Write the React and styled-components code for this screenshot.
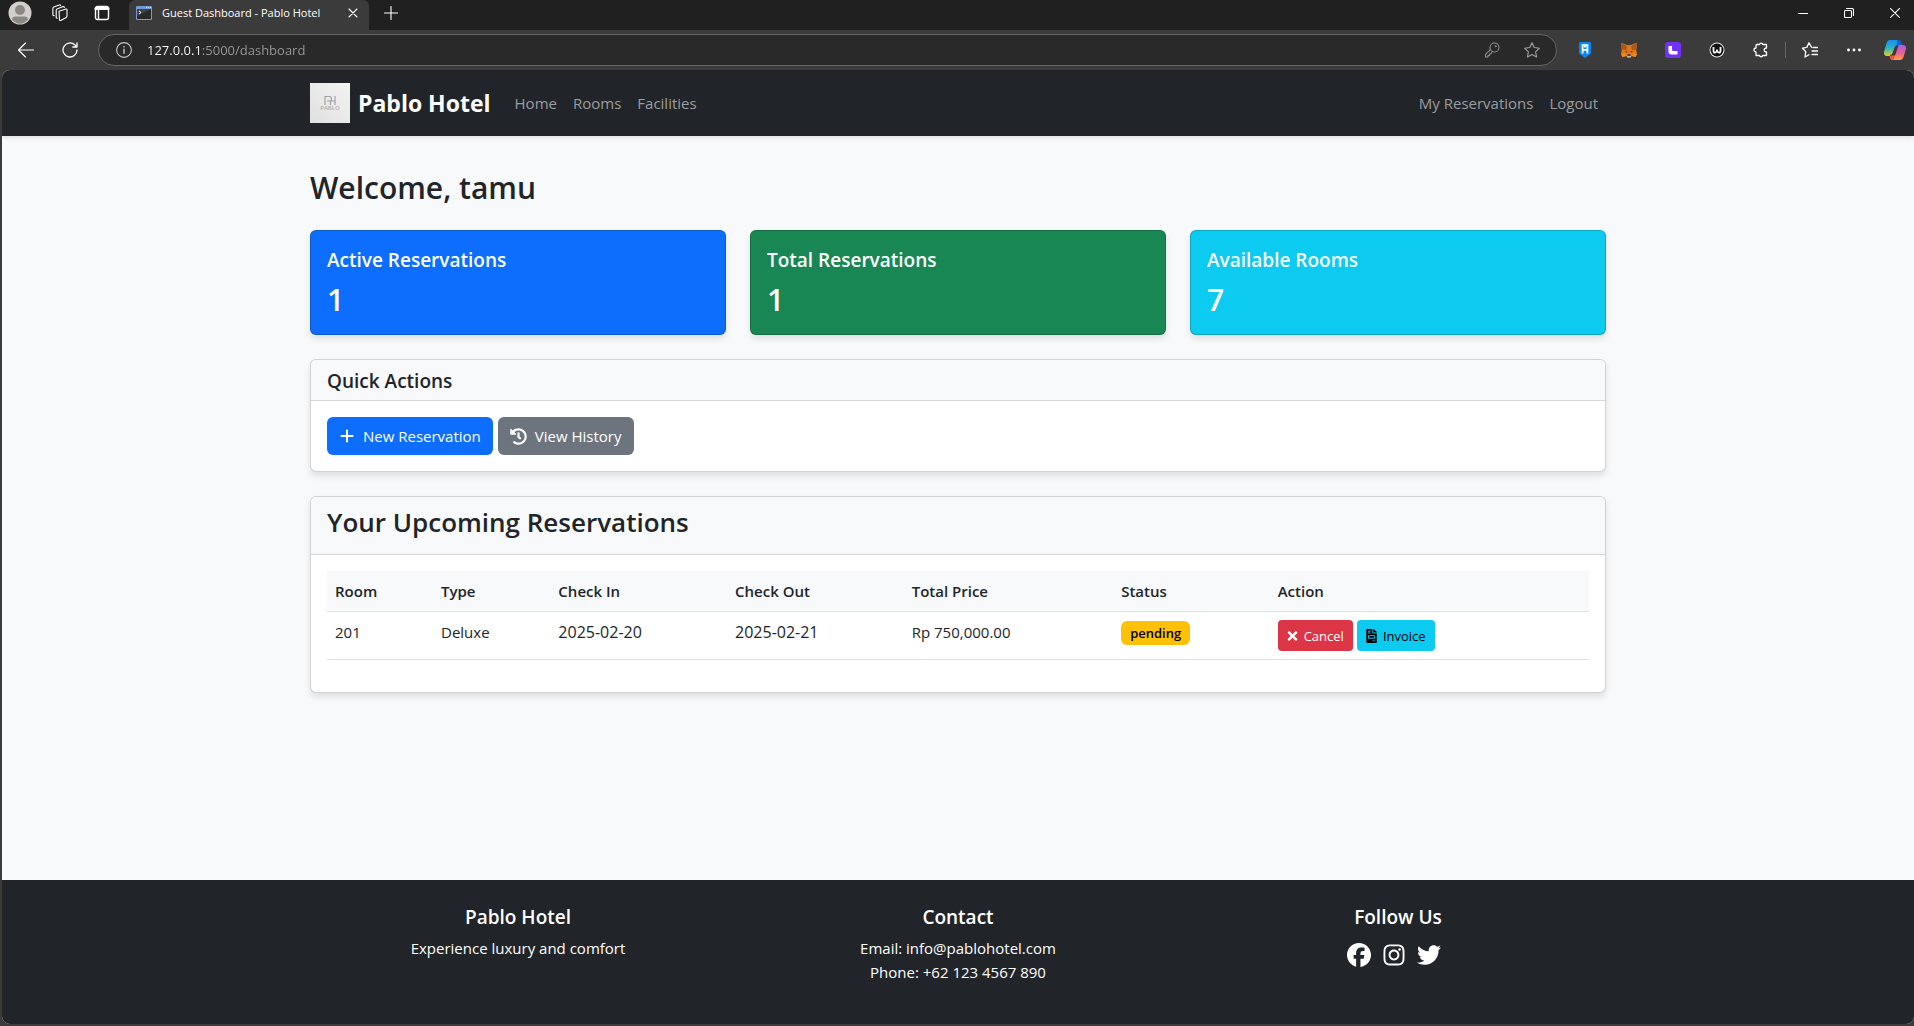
import React from 'react';
import styled, { createGlobalStyle, css } from 'styled-components';
import { FaFacebook, FaInstagram, FaTwitter, FaPlus } from 'react-icons/fa6';
import { FaHistory, FaFileInvoice, FaTimes } from 'react-icons/fa';

const GlobalStyle = createGlobalStyle`
  *, *::before, *::after { box-sizing: border-box; }
  body {
    margin: 0;
    background: #3b3b3b;
    color: #212529;
    font-family: 'Open Sans', 'Noto Sans', sans-serif;
    font-size: 15px;
    line-height: 24px;
  }
  h1, h2, h3, p { margin: 0; }
  a { text-decoration: none; }
  button { font: inherit; cursor: pointer; }
  svg { display: block; flex: none; }
`;

const Window = styled.div`
  display: flex;
  flex-direction: column;
  min-height: 100vh;
  padding-bottom: 2px;
`;

/* ---------- browser frame ---------- */

const TabStrip = styled.div`
  display: flex;
  align-items: stretch;
  height: 30px;
  background: #202020;
  color: #fff;
`;

const ChromeButton = styled.button`
  display: flex;
  align-items: center;
  justify-content: center;
  width: ${(p) => p.$width || 40}px;
  height: ${(p) => p.$height || 30}px;
  padding: 0;
  border: 0;
  background: transparent;
  color: ${(p) => p.$color || '#fff'};
`;

const LeadingTools = styled.div`
  display: flex;
  height: 26px;
  padding-right: 5px;
`;

const Tab = styled.div`
  display: flex;
  align-items: center;
  width: 240px;
  padding: 0 6px 4px 7px;
  border-radius: 6px 6px 0 0;
  background: #3b3b3b;
`;

const TabTitle = styled.span`
  flex: 1;
  padding-left: 10px;
  font-size: 11px;
  line-height: 16px;
  white-space: nowrap;
`;

const WindowControls = styled.div`
  display: flex;
  gap: 8px;
  height: 26px;
  margin-left: auto;
`;

const Toolbar = styled.div`
  display: flex;
  align-items: center;
  height: 40px;
  padding-left: 4px;
  background: #3b3b3b;
`;

const AddressBar = styled.label`
  display: flex;
  flex: 1;
  align-items: center;
  height: 32px;
  margin: 0 6px;
  padding: 0 4px 0 17px;
  border: 1px solid #666;
  border-radius: 16px;
  background: #292929;
`;

const AddressInput = styled.input`
  flex: 1;
  min-width: 0;
  margin-left: 15px;
  padding: 0;
  border: 0;
  outline: 0;
  background: linear-gradient(to right, #fff 55px, #9a9a9a 55px);
  background-clip: text;
  -webkit-text-fill-color: transparent;
  color: #9a9a9a;
  font: 13px/20px 'Open Sans', 'Noto Sans', sans-serif;
`;

const ToolbarDivider = styled.span`
  width: 1px;
  height: 16px;
  margin: 0 2px;
  background: #666;
`;

/* ---------- site ---------- */

const Site = styled.div`
  display: flex;
  flex: 1;
  flex-direction: column;
  margin-left: 2px;
  border-radius: 8px;
  overflow: hidden;
  background: #f8f9fa;
`;

const Container = styled.div`
  width: 100%;
  max-width: 1320px;
  margin: 0 auto;
  padding: 0 12px;
`;

const Navbar = styled.nav`
  padding: 13px 0;
  background: #212529;
  box-shadow: 0 2px 4px rgba(0, 0, 0, 0.1);
`;

const NavInner = styled(Container)`
  display: flex;
  align-items: center;
`;

const Brand = styled.a`
  display: flex;
  align-items: center;
  gap: 8px;
  margin-right: 24px;
  color: #fff;
  font-size: 23px;
  font-weight: 700;
  line-height: 40px;
`;

const NavLinks = styled.div`
  display: flex;
  gap: 16px;
  padding-right: 8px;
  & + & { margin-left: auto; }
`;

const NavLink = styled.a`
  color: #9b9d9e;
`;

const Main = styled.main`
  flex: 1;
  padding: 32px 0 24px;
`;

const Welcome = styled.h1`
  margin-bottom: 22px;
  font-size: 30px;
  font-weight: 600;
  line-height: 40px;
`;

const StatGrid = styled.div`
  display: grid;
  grid-template-columns: repeat(3, 1fr);
  gap: 24px;
  margin-bottom: 24px;
`;

const cardBox = css`
  border: 1px solid rgba(0, 0, 0, 0.176);
  border-radius: 6px;
  box-shadow: 0 4px 6px rgba(0, 0, 0, 0.1);
`;

const StatCard = styled.section`
  ${cardBox}
  padding: 16px 16px 14px;
  background: ${(p) => p.$color};
  color: #fff;
`;

const StatTitle = styled.h2`
  margin-bottom: 6px;
  font-size: 19px;
  font-weight: 600;
  line-height: 26px;
`;

const StatValue = styled.p`
  font-size: 30px;
  font-weight: 600;
  line-height: 41px;
`;

const Card = styled.section`
  ${cardBox}
  margin-bottom: 24px;
  background: #fff;
`;

const CardHeader = styled.header`
  padding: 8px 16px ${(p) => (p.$large ? 14 : 6)}px;
  border-bottom: 1px solid #d5d6d7;
  border-radius: 5px 5px 0 0;
  background: #f8f9fa;
`;

const CardTitle = styled.h2`
  font-size: ${(p) => (p.$large ? 26 : 19)}px;
  font-weight: 600;
  line-height: ${(p) => (p.$large ? 35 : 26)}px;
`;

const CardBody = styled.div`
  padding: 16px;
`;

const ActionBar = styled.div`
  display: flex;
  gap: ${(p) => (p.$small ? 4 : 5)}px;
`;

const tones = {
  primary: ['#0d6efd', '#fff'],
  secondary: ['#6c757d', '#fff'],
  danger: ['#dc3545', '#fff'],
  info: ['#0dcaf0', '#000'],
};

const smallButton = css`
  gap: 6px;
  height: 31px;
  padding: 0 9px;
  border-radius: 4px;
  font-size: 13px;
  svg { width: 11px; height: 14px; }
`;

const Button = styled.button`
  display: inline-flex;
  align-items: center;
  gap: 8px;
  height: 38px;
  padding: 0 12px;
  border: 0;
  border-radius: 6px;
  background: ${(p) => tones[p.$tone][0]};
  color: ${(p) => tones[p.$tone][1]};
  font-size: 15px;
  white-space: nowrap;
  ${(p) => p.$small && smallButton}
`;

const Table = styled.table`
  width: 100%;
  margin-bottom: 16px;
  border-collapse: separate;
  border-spacing: 0;
  table-layout: fixed;
`;

const HeadCell = styled.th`
  width: ${(p) => p.$width};
  padding: 8px;
  border-bottom: 1px solid #dee2e6;
  background: #f8f9fa;
  font-weight: 600;
  text-align: left;
`;

const Cell = styled.td`
  padding: 8px;
  border-bottom: 1px solid #dee2e6;
  vertical-align: top;
  font-size: ${(p) => (p.$numeric ? 16 : 15)}px;
`;

const Badge = styled.span`
  display: inline-block;
  margin-top: 1px;
  padding: 0 9px;
  border-radius: 6px;
  background: #ffc107;
  color: #000;
  font-size: 13px;
  font-weight: 600;
  vertical-align: top;
`;

const Footer = styled.footer`
  padding: 24px 0;
  background: #212529;
  color: #fff;
  text-align: center;
`;

const FooterGrid = styled(Container)`
  display: grid;
  grid-template-columns: repeat(3, 1fr);
  gap: 24px;
`;

const FooterTitle = styled.h2`
  margin-bottom: 6px;
  font-size: 19px;
  font-weight: 600;
  line-height: 26px;
`;

const FooterText = styled.p`
  padding-bottom: 16px;
`;

const Socials = styled.div`
  display: flex;
  justify-content: center;
  gap: 11px;
  padding: 7px 8px 0 0;
`;

const SocialLink = styled.a`
  color: #fff;
`;

/* ---------- drawings ---------- */

const Line = ({ size = 16, children, ...rest }) => (
  <svg width={size} height={size} viewBox={`0 0 ${size} ${size}`} fill="none" stroke="currentColor" strokeWidth="1.1" strokeLinecap="round" strokeLinejoin="round" aria-hidden="true" {...rest}>
    {children}
  </svg>
);

const Avatar = () => (
  <svg width="24" height="24" viewBox="0 0 24 24" aria-hidden="true">
    <circle cx="12" cy="12" r="11.5" fill="#d3d0cc" />
    <circle cx="12" cy="9" r="5" fill="#8b8783" />
    <path d="M4 18.5c0-2 1.600-2.900 3.500-2.900h9c1.900 0 3.500.900 3.500 2.900-2 2.600-4.700 4.200-8 4.200s-6-1.600-8-4.200z" fill="#8b8783" />
  </svg>
);

const Workspaces = () => (
  <Line size={18}>
    <path d="M8 7.200l7-2.200q1-.2 1 .8v6.400q0 .9-.8 1.200l-5.500 3q-1 .5-1.200-.6z" />
    <path d="M6.200 14.200l-1-.4V6.200q0-1 .8-1.300l6.200-2.300q1-.3 1.100.9" />
    <path d="M3.200 11.800l-1.300-.6V4.400q0-1 .8-1.300L8.400 1q1-.3 1.200.5" />
  </Line>
);

const VerticalTabs = () => (
  <Line strokeWidth="1.400">
    <rect x="1.500" y="1.500" width="13" height="13" rx="2" />
    <path d="M2 3.500h12" strokeWidth="3" />
    <path d="M4.500 4v10" />
  </Line>
);

const TerminalIcon = () => (
  <svg width="16" height="14" viewBox="0 0 16 14" aria-hidden="true">
    <rect width="16" height="14" rx="1" fill="#6f9ad6" />
    <rect x="1" y="3" width="14" height="10" fill="#2a2a2a" />
    <path d="M1 3h14L1 10z" fill="#444" />
    <path d="M3 5l2 1.500L3 8" stroke="#fff" fill="none" />
    <path d="M10 1.500h1M12 1.500h1M14 1.500h1" stroke="#d9e8ff" />
  </svg>
);

const Shield = () => (
  <svg width="14" height="16" viewBox="0 0 14 16" aria-hidden="true">
    <path d="M2 0h10l1 1v10.500L7 16l-6-4.500V1z" fill="#0b87f0" />
    <path d="M4.600 11.500V3.200h4.800v8.300M4.600 7.800h4.800M7 3v2.500" stroke="#fff" strokeWidth="1.800" fill="none" />
  </svg>
);

const Fox = () => (
  <svg width="16" height="16" viewBox="0 0 16 16" aria-hidden="true">
    <path d="M.5.800L6 3h4L15.500.800 16 5l-.8 3 .8 4-1.500 3-3.700-1-1.300 1.500h-3L5.200 14l-3.700 1L0 12l.8-4L0 5z" fill="#e2761b" />
    <path d="M.5.800L6 4.500 5 8 .8 7.500 0 5zM15.500.800L10 4.500l1 3.500 4.200-.5L16 5z" fill="#a8571f" />
    <path d="M4 9l2.500.3-.8 1.300zM12 9l-2.500.3.800 1.300z" fill="#3a2f2a" />
    <path d="M0 12l4-.5 1.200 2.500-3.700 1zM16 12l-4-.5-1.200 2.500 3.700 1z" fill="#f6851b" />
    <path d="M5.500 13.200L6.500 12h3l1 1.200-1 2.300h-3z" fill="#c9b7a8" />
    <path d="M6.500 12.300h3l.3 1.500H6.200z" fill="#1d2027" />
  </svg>
);

const PurpleL = () => (
  <svg width="16" height="16" viewBox="0 0 16 16" aria-hidden="true">
    <rect width="16" height="16" rx="3" fill="#7132f5" />
    <path d="M3.500 4h3.500v3.500Q7 9 8.500 9H12.500v3.500H6.500Q3.500 12.500 3.500 9.500z" fill="#fff" />
  </svg>
);

const RoundW = () => (
  <svg width="16" height="16" viewBox="0 0 16 16" aria-hidden="true">
    <circle cx="8" cy="8" r="7.500" fill="#e6e6e6" />
    <circle cx="8" cy="8" r="6.500" fill="#111" />
    <path d="M4.500 5v3.500Q4.500 11 6.500 10.500 8 10 8 7.500 8 10 9.500 10.500q2 .5 2-2V5" stroke="#fff" strokeWidth="1.800" fill="none" />
  </svg>
);

const Copilot = () => (
  <svg width="24" height="22" viewBox="0 0 24 22" aria-hidden="true">
    <defs>
      <linearGradient id="coolRibbon" x1="0" y1="0" x2="0" y2="1">
        <stop offset="0" stopColor="#1b8ef2" />
        <stop offset="0.500" stopColor="#24b5c4" />
        <stop offset="1" stopColor="#e8d21c" />
      </linearGradient>
      <linearGradient id="warmRibbon" x1="0" y1="0" x2="0" y2="1">
        <stop offset="0" stopColor="#a55bf0" />
        <stop offset="0.550" stopColor="#f0608c" />
        <stop offset="1" stopColor="#ffa04a" />
      </linearGradient>
    </defs>
    <path d="M7 1h8q2 0 2.600 2l.9 3H14q-1.600 0-2.200 2l-2 6.500Q9 17 6.500 17H4Q.5 17 1 13l2.600-9Q4.500 1 7 1z" fill="url(#coolRibbon)" />
    <path d="M14 1h1.500q2 0 2.500 2l1 3.500h-3.500q-1.500 0-1.700-2z" fill="#1a5fd0" />
    <path d="M17 21H9.500Q7.700 21 7 18.500L6.500 16q2.500 0 3.300-2.500l2-6Q12.500 6 14 6h6.500q3 .5 2.500 4l-2.500 8Q19.500 21 17 21z" fill="url(#warmRibbon)" />
    <path d="M12 7.500l2-1.500h1.500l-3 9.500q-.6 1.500-2.500 1.500H7.500l-.7-1q2.300 0 3-2.500z" fill="#3a3a3a" />
    <path d="M7 16.500h4.500L10.500 21Q7.800 21 7 18z" fill="#f0512f" />
  </svg>
);

const HotelLogo = () => (
  <svg width="40" height="40" viewBox="0 0 40 40" role="img" aria-label="Pablo Hotel logo">
    <defs>
      <linearGradient id="logoPaper" x1="0" y1="1" x2="1" y2="0">
        <stop offset="0" stopColor="#e0e0e0" />
        <stop offset="1" stopColor="#f3f3f3" />
      </linearGradient>
    </defs>
    <rect width="40" height="40" fill="url(#logoPaper)" />
    <path d="M15 22v-8.500h4.500q2 0 2 2.300t-2 2.200H17M20.500 18v4M20.500 18h4.500M25 13v9" stroke="#a3a3a3" strokeWidth="1.200" fill="none" />
    <text x="20" y="27" textAnchor="middle" fontFamily="Open Sans, sans-serif" fontSize="6" fontWeight="600" fill="#b0b0b0">PABLO</text>
  </svg>
);

/* ---------- data ---------- */

const stats = [
  { title: 'Active Reservations', value: 1, color: '#0d6efd' },
  { title: 'Total Reservations', value: 1, color: '#198754' },
  { title: 'Available Rooms', value: 7, color: '#0dcaf0' },
];

const columns = [
  ['Room', '8.4%'],
  ['Type', '9.3%'],
  ['Check In', '14%'],
  ['Check Out', '14%'],
  ['Total Price', '16.6%'],
  ['Status', '12.4%'],
  ['Action', '25.3%'],
];

const reservations = [
  { room: '201', type: 'Deluxe', checkIn: '2025-02-20', checkOut: '2025-02-21', price: 'Rp 750,000.00', status: 'pending' },
];

function BrowserFrame() {
  return (
    <header>
      <TabStrip>
        <LeadingTools>
          <ChromeButton $height={26} aria-label="Profile"><Avatar /></ChromeButton>
          <ChromeButton $height={26} aria-label="Workspaces"><Workspaces /></ChromeButton>
          <ChromeButton $height={26} $width={44} aria-label="Tab actions"><VerticalTabs /></ChromeButton>
        </LeadingTools>
        <Tab>
          <TerminalIcon />
          <TabTitle>Guest Dashboard - Pablo Hotel</TabTitle>
          <ChromeButton $width={20} $height={20} aria-label="Close tab">
            <Line size={10}><path d="M1 1l8 8M9 1L1 9" /></Line>
          </ChromeButton>
        </Tab>
        <ChromeButton $width={44} $height={26} aria-label="New tab">
          <Line size={14}><path d="M7 .5v13M.5 7h13" /></Line>
        </ChromeButton>
        <WindowControls>
          <ChromeButton $width={38} $height={26} aria-label="Minimize">
            <Line size={10}><path d="M0 5.500h10" /></Line>
          </ChromeButton>
          <ChromeButton $width={38} $height={26} aria-label="Restore">
            <Line size={10}><rect x=".5" y="2.500" width="7" height="7" rx="1" /><path d="M2.500.5H8q1.500 0 1.500 1.500v5.500" /></Line>
          </ChromeButton>
          <ChromeButton $width={38} $height={26} aria-label="Close window">
            <Line size={10}><path d="M0 0l10 10M10 0L0 10" /></Line>
          </ChromeButton>
        </WindowControls>
      </TabStrip>
      <Toolbar>
        <ChromeButton $width={44} aria-label="Back">
          <Line><path d="M15.500 8H.5M7.500 1L.5 8l7 7" /></Line>
        </ChromeButton>
        <ChromeButton $width={44} aria-label="Refresh">
          <Line strokeWidth="1.300"><path d="M15 8a7 7 0 1 1-2.300-5.200L15 5M15 .8V5h-4.200" /></Line>
        </ChromeButton>
        <AddressBar>
          <Line color="#c8c8c8"><circle cx="8" cy="8" r="7.400" /><path d="M8 7.300v4M8 4.500v.4" strokeWidth="1.400" /></Line>
          <AddressInput aria-label="Address" defaultValue="127.0.0.1:5000/dashboard" spellCheck={false} />
          <ChromeButton $color="#8f8f8f" aria-label="Saved passwords">
            <Line><circle cx="10.500" cy="5.500" r="4.500" /><path d="M6.300 7.600L1.500 12.400V15H4v-1.500h1.500V12H7l1.300-2.500" /><circle cx="11.800" cy="4.200" r=".5" /></Line>
          </ChromeButton>
          <ChromeButton $color="#a0a0a0" aria-label="Add to favorites">
            <Line><path d="M8 .8l2.200 4.700 5.200.7-3.800 3.600 1 5.200L8 12.500 3.400 15l1-5.200L.6 6.200l5.200-.7z" /></Line>
          </ChromeButton>
        </AddressBar>
        <ChromeButton $width={44} aria-label="Wallet extension"><Shield /></ChromeButton>
        <ChromeButton $width={44} aria-label="Fox extension"><Fox /></ChromeButton>
        <ChromeButton $width={44} aria-label="L extension"><PurpleL /></ChromeButton>
        <ChromeButton $width={44} aria-label="W extension"><RoundW /></ChromeButton>
        <ChromeButton $width={44} aria-label="Extensions">
          <Line strokeWidth="1.300"><path d="M4 2.500h2.500a1.700 1.700 0 0 1 3.300 0H13.500V6q-2.300-.1-2.300 2t2.300 2v3.500H9.800a1.700 1.700 0 0 1-3.300 0H3V10a2 2 0 0 1 0-4V3.500q0-1 1-1z" /></Line>
        </ChromeButton>
        <ToolbarDivider />
        <ChromeButton $width={44} aria-label="Favorites">
          <Line strokeWidth="1.300"><path d="M9.500 5.200L7 .8 4.800 5.400.5 6.200l3.300 3.500L3 15l4-2.200M11 5.500h4.500M10 9h5.500M10 12.500h5.500" /></Line>
        </ChromeButton>
        <ChromeButton $width={44} aria-label="Settings and more">
          <Line fill="currentColor" stroke="none"><circle cx="2.500" cy="8" r="1.400" /><circle cx="8" cy="8" r="1.400" /><circle cx="13.500" cy="8" r="1.400" /></Line>
        </ChromeButton>
        <ChromeButton $width={38} aria-label="Copilot"><Copilot /></ChromeButton>
      </Toolbar>
    </header>
  );
}

export default function App() {
  return (
    <Window>
      <GlobalStyle />
      <BrowserFrame />
      <Site>
        <Navbar>
          <NavInner>
            <Brand href="#"><HotelLogo />Pablo Hotel</Brand>
            <NavLinks>
              <NavLink href="#">Home</NavLink>
              <NavLink href="#">Rooms</NavLink>
              <NavLink href="#">Facilities</NavLink>
            </NavLinks>
            <NavLinks>
              <NavLink href="#">My Reservations</NavLink>
              <NavLink href="#">Logout</NavLink>
            </NavLinks>
          </NavInner>
        </Navbar>
        <Main>
          <Container>
            <Welcome>Welcome, tamu</Welcome>
            <StatGrid>
              {stats.map((s) => (
                <StatCard key={s.title} $color={s.color}>
                  <StatTitle>{s.title}</StatTitle>
                  <StatValue>{s.value}</StatValue>
                </StatCard>
              ))}
            </StatGrid>
            <Card>
              <CardHeader><CardTitle>Quick Actions</CardTitle></CardHeader>
              <CardBody>
                <ActionBar>
                  <Button $tone="primary"><FaPlus size={16} />New Reservation</Button>
                  <Button $tone="secondary"><FaHistory size={17} />View History</Button>
                </ActionBar>
              </CardBody>
            </Card>
            <Card>
              <CardHeader $large><CardTitle $large>Your Upcoming Reservations</CardTitle></CardHeader>
              <CardBody>
                <Table>
                  <thead>
                    <tr>{columns.map(([name, width]) => <HeadCell key={name} scope="col" $width={width}>{name}</HeadCell>)}</tr>
                  </thead>
                  <tbody>
                    {reservations.map((r) => (
                      <tr key={r.room}>
                        <Cell>{r.room}</Cell>
                        <Cell>{r.type}</Cell>
                        <Cell $numeric>{r.checkIn}</Cell>
                        <Cell $numeric>{r.checkOut}</Cell>
                        <Cell>{r.price}</Cell>
                        <Cell><Badge>{r.status}</Badge></Cell>
                        <Cell>
                          <ActionBar $small>
                            <Button $small $tone="danger"><FaTimes />Cancel</Button>
                            <Button $small $tone="info"><FaFileInvoice />Invoice</Button>
                          </ActionBar>
                        </Cell>
                      </tr>
                    ))}
                  </tbody>
                </Table>
              </CardBody>
            </Card>
          </Container>
        </Main>
        <Footer>
          <FooterGrid>
            <div>
              <FooterTitle>Pablo Hotel</FooterTitle>
              <FooterText>Experience luxury and comfort</FooterText>
            </div>
            <div>
              <FooterTitle>Contact</FooterTitle>
              <FooterText>Email: info@pablohotel.com<br />Phone: +62 123 4567 890</FooterText>
            </div>
            <div>
              <FooterTitle>Follow Us</FooterTitle>
              <Socials>
                <SocialLink href="#" aria-label="Facebook"><FaFacebook size={24} /></SocialLink>
                <SocialLink href="#" aria-label="Instagram"><FaInstagram size={24} /></SocialLink>
                <SocialLink href="#" aria-label="Twitter"><FaTwitter size={24} /></SocialLink>
              </Socials>
            </div>
          </FooterGrid>
        </Footer>
      </Site>
    </Window>
  );
}
